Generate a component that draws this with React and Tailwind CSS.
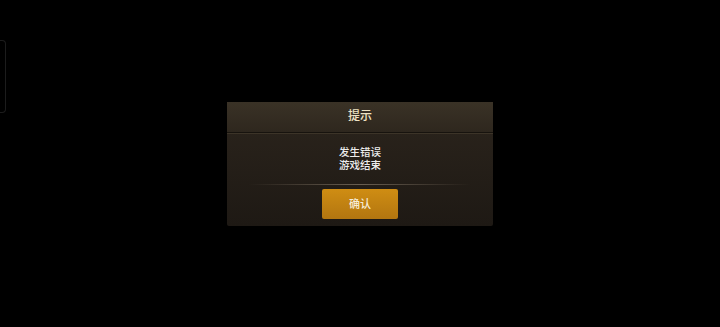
export default function App() {
  return (
    <div className="relative w-[720px] h-[327px] bg-black flex items-center justify-center" style={{ fontFamily: '"Noto Sans CJK SC", "Noto Sans", sans-serif' }}>
      <div className="absolute left-0 top-[40px] w-[6px] h-[73px] rounded-r-[4px] border border-l-0 border-[#1c1c1c]" />
      <div className="w-[266px] h-[124px] flex flex-col rounded-[2px] bg-gradient-to-b from-[#2c251d] to-[#1e1914] shadow-[0_0_2px_#000]">
        <div className="h-[31px] pb-[3px] flex items-center justify-center bg-gradient-to-b from-[#3a3226] to-[#2e271e] border-b border-b-[#17130e] shadow-[0_1px_0_#3c3428]">
          <span className="text-[12px] leading-none font-medium text-[#efe4c4]">提示</span>
        </div>
        <div className="flex flex-col items-center pt-[13px] gap-px text-[10.5px] leading-[12px] font-medium text-[#ececec]">
          <span>发生错误</span>
          <span>游戏结束</span>
        </div>
        <div className="mt-[13px] mx-[22px] h-px bg-gradient-to-r from-transparent via-[#6a5f52] to-transparent" />
        <div className="flex justify-center mt-[4px]">
          <div className="w-[76px] h-[30px] rounded-[2px] bg-gradient-to-b from-[#cf8d13] to-[#b37610] flex items-center justify-center text-[11px] font-medium text-[#f6ecd6]">
            确认
          </div>
        </div>
      </div>
    </div>
  );
}
